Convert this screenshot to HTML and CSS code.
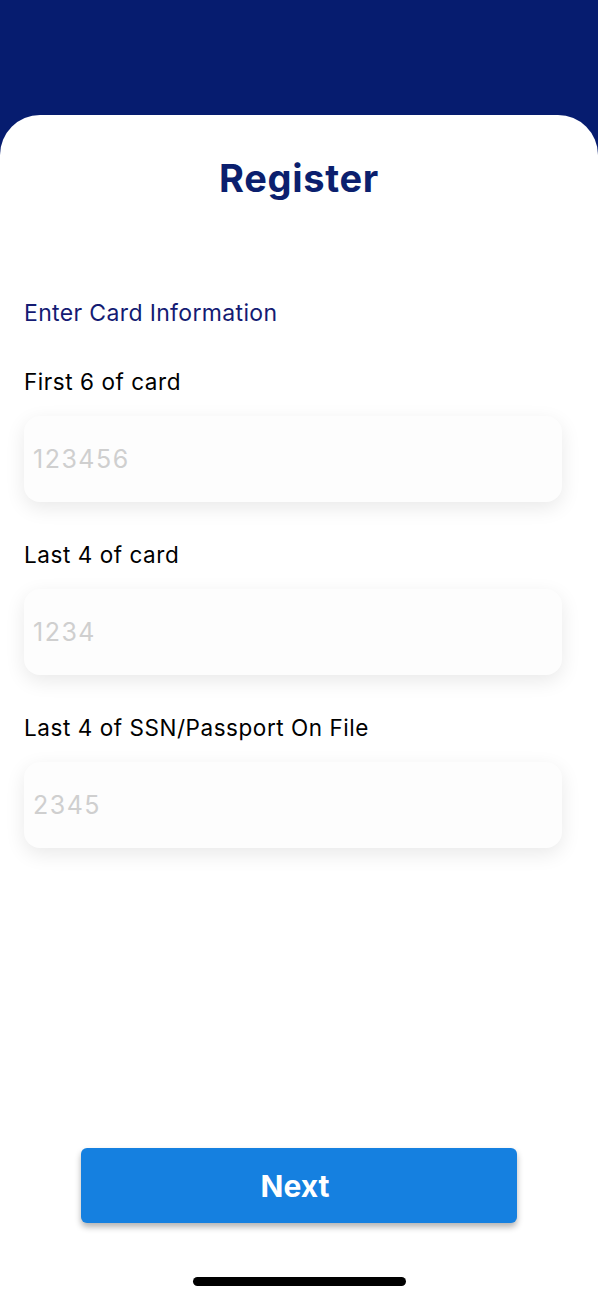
FILE: index.html
```html
<!DOCTYPE html>
<html lang="en">
<head>
<meta charset="utf-8">
<title>Register</title>
<link rel="stylesheet" href="styles.css">
</head>
<body>
<div class="screen">
  <div class="card">
    <h1 class="title">Register</h1>
    <div class="section">Enter Card Information</div>
    <div class="field">
      <div class="label">First 6 of card</div>
      <div class="input"><span class="placeholder">123456</span></div>
    </div>
    <div class="field">
      <div class="label">Last 4 of card</div>
      <div class="input"><span class="placeholder">1234</span></div>
    </div>
    <div class="field">
      <div class="label">Last 4 of SSN/Passport On File</div>
      <div class="input"><span class="placeholder">2345</span></div>
    </div>
    <div class="spacer"></div>
    <div class="actions">
      <button class="next">Next</button>
    </div>
    <div class="home-bar"></div>
  </div>
</div>
</body>
</html>
```
FILE: styles.css
```css
html, body {
  margin: 0;
  padding: 0;
  background: #061c6f;
}
.screen {
  width: 598px;
  height: 1300px;
  padding-top: 115px;
  box-sizing: border-box;
  background: #061c6f;
  font-family: Inter, "Noto Sans", "Liberation Sans", sans-serif;
}
.card {
  background: #ffffff;
  border-radius: 40px 40px 0 0;
  height: 1185px;
  box-sizing: border-box;
  padding: 40px 36px 0 24px;
  display: flex;
  flex-direction: column;
}
.title {
  margin: 0;
  font-size: 38px;
  line-height: 46px;
  font-weight: 700;
  letter-spacing: 0.7px;
  color: #0b1f6e;
  text-align: center;
  padding-left: 12px;
}
.section {
  margin-top: 98px;
  font-size: 23px;
  line-height: 28px;
  letter-spacing: 0.35px;
  color: #141b73;
}
.field {
  margin-top: 41px;
}
.field + .field {
  margin-top: 39px;
}
.label {
  font-size: 22.5px;
  line-height: 28px;
  letter-spacing: 0.55px;
  color: #000000;
}
.input {
  margin-top: 20px;
  height: 86px;
  background: #fdfdfd;
  border-radius: 16px;
  box-shadow: 0 6px 20px rgba(0, 0, 0, 0.09);
  display: flex;
  align-items: center;
  padding-left: 9px;
}
.placeholder {
  font-size: 25px;
  letter-spacing: 1.5px;
  color: #cfcfcf;
}
.spacer {
  flex: 1;
}
.actions {
  display: flex;
  justify-content: flex-start;
}
.next {
  width: 436px;
  height: 75px;
  margin-left: 57px;
  padding: 0 8px 0 0;
  border: none;
  border-radius: 6px;
  background: #1580e0;
  color: #ffffff;
  font-family: Inter, "Noto Sans", "Liberation Sans", sans-serif;
  font-size: 30px;
  font-weight: 700;
  box-shadow: 0 4px 6px rgba(0, 0, 0, 0.3);
}
.home-bar {
  width: 213px;
  height: 9px;
  border-radius: 5px;
  background: #000000;
  margin: 54px 0 14px 169px;
}
```
